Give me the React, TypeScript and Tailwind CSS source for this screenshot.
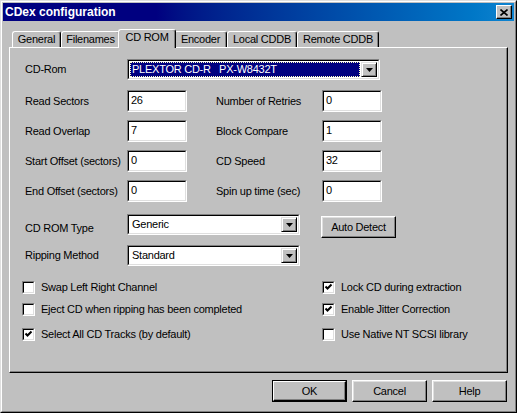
import React from 'react';

const Check = () => (
  <svg width="9" height="9" viewBox="0 0 9 9" className="block">
    <path d="M1.5 3.5 L3.5 5.5 L7.5 1.5" stroke="black" strokeWidth="2" fill="none" />
  </svg>
);

const Arrow = () => (
  <svg width="7" height="4" viewBox="0 0 7 4" className="block">
    <polygon points="0,0 7,0 3.5,4" fill="black" />
  </svg>
);

const Sunken: React.FC<{ className?: string; children?: React.ReactNode }> = ({ className = '', children }) => (
  <div className={`border border-t-[#808080] border-l-[#808080] border-r-white border-b-white ${className}`}>
    <div className="h-full w-full border border-t-black border-l-black border-r-[#dfdfdf] border-b-[#dfdfdf] bg-white flex items-center">
      {children}
    </div>
  </div>
);

const Edit: React.FC<{ value: string }> = ({ value }) => (
  <Sunken className="w-[60px] h-[22px]">
    <span className="pl-[2px] -mt-[2px]">{value}</span>
  </Sunken>
);

const DropButton = () => (
  <div className="w-[16px] h-full border border-t-[#dfdfdf] border-l-[#dfdfdf] border-r-black border-b-black shadow-[inset_1px_1px_white,inset_-1px_-1px_#808080] bg-[#c0c0c0] flex items-center justify-center">
    <Arrow />
  </div>
);

const Combo: React.FC<{ value: string; className?: string; selected?: boolean }> = ({ value, className = '', selected }) => (
  <Sunken className={`h-[21px] ${className}`}>
    <div className="flex-1 h-full p-px flex">
      {selected ? (
        <div className="flex-1 bg-[#000080] text-white border border-dotted border-[#ffffc0] flex items-center pl-[1px] whitespace-pre">
          {value}
        </div>
      ) : (
        <div className="flex-1 flex items-center pl-[2px]">{value}</div>
      )}
    </div>
    <div className="h-full py-px pr-px">
      <DropButton />
    </div>
  </Sunken>
);

const CheckBox: React.FC<{ label: string; checked?: boolean }> = ({ label, checked }) => (
  <div className="flex items-center gap-[6px] h-[13px]">
    <Sunken className="w-[13px] h-[13px] shrink-0">
      <div className="w-full h-full flex items-center justify-center">{checked && <Check />}</div>
    </Sunken>
    <span className="whitespace-nowrap">{label}</span>
  </div>
);

const Button: React.FC<{ label: string; isDefault?: boolean }> = ({ label, isDefault }) =>
  isDefault ? (
    <div className="w-[75px] h-[22px] border border-black">
      <div className="w-full h-full border border-t-white border-l-white border-r-black border-b-black shadow-[inset_-1px_-1px_#808080] flex items-center justify-center">
        {label}
      </div>
    </div>
  ) : (
    <div className="w-[75px] h-[22px] border border-t-white border-l-white border-r-black border-b-black shadow-[inset_-1px_-1px_#808080,inset_1px_1px_#dfdfdf] flex items-center justify-center">
      {label}
    </div>
  );

const Tab: React.FC<{ label: string; className: string; active?: boolean }> = ({ label, className, active }) => (
  <div
    className={`${className} border-t border-l border-r border-t-white border-l-white border-r-black rounded-t-[3px] shadow-[inset_-1px_0_#808080] bg-[#c0c0c0] flex items-center justify-center ${
      active ? 'relative z-10 h-[19px] -mb-px -mx-[2px] pb-[3px]' : 'h-[16px] pb-px'
    }`}
  >
    {label}
  </div>
);

export default function App() {
  return (
    <div className="w-[517px] h-[413px] bg-[#c0c0c0] border border-t-[#dfdfdf] border-l-[#dfdfdf] border-r-black border-b-black font-['Liberation_Sans',Arial,sans-serif] text-[11px] tracking-[-0.25px] text-black leading-[13px] select-none">
      <div className="h-full border border-t-white border-l-white border-r-[#808080] border-b-[#808080] p-px flex flex-col">
        {/* Title bar */}
        <div className="h-[18px] bg-linear-to-r from-[#000080] from-30% to-[#1084d0] flex items-center justify-between pl-[2px] pr-[2px]">
          <span className="text-white font-bold text-[12px] tracking-normal">CDex configuration</span>
          <div className="w-[16px] h-[14px] border border-t-white border-l-white border-r-black border-b-black shadow-[inset_-1px_-1px_#808080] bg-[#c0c0c0] flex items-center justify-center">
            <svg width="8" height="7" viewBox="0 0 8 7" className="block">
              <path d="M0.5 0.5 L7.5 6.5 M7.5 0.5 L0.5 6.5" stroke="black" strokeWidth="1.6" />
            </svg>
          </div>
        </div>

        <div className="px-[6px] flex flex-col">
          {/* Tabs */}
          <div className="mt-[8px] h-[18px] flex items-end pl-[3px]">
            <Tab label="General" className="w-[49px]" />
            <Tab label="Filenames" className="w-[59px]" />
            <Tab label="CD ROM" className="w-[58px]" active />
            <Tab label="Encoder" className="w-[53px]" />
            <Tab label="Local CDDB" className="w-[70px]" />
            <Tab label="Remote CDDB" className="w-[82px]" />
          </div>

          {/* Panel */}
          <div className="w-[499px] h-[326px] border border-t-white border-l-white border-r-black border-b-black shadow-[inset_-1px_-1px_#808080] pl-[15px] pt-[11px] flex flex-col">
            <div className="flex items-center h-[21px]">
              <span className="w-[102px]">CD-Rom</span>
              <Combo value="PLEXTOR CD-R   PX-W8432T" className="w-[253px]" selected />
            </div>

            <div className="mt-[10px] grid grid-cols-[102px_60px_29px_106px_60px] auto-rows-[22px] gap-y-[8px] items-center">
              <span>Read Sectors</span>
              <Edit value="26" />
              <span />
              <span>Number of Retries</span>
              <Edit value="0" />

              <span>Read Overlap</span>
              <Edit value="7" />
              <span />
              <span>Block Compare</span>
              <Edit value="1" />

              <span className="whitespace-nowrap">Start Offset (sectors)</span>
              <Edit value="0" />
              <span />
              <span>CD Speed</span>
              <Edit value="32" />

              <span className="whitespace-nowrap">End Offset (sectors)</span>
              <Edit value="0" />
              <span />
              <span>Spin up time (sec)</span>
              <Edit value="0" />
            </div>

            <div className="mt-[12px] flex items-center h-[21px]">
              <span className="w-[102px] mt-[8px]">CD ROM Type</span>
              <Combo value="Generic" className="w-[173px]" />
              <div className="ml-[21px] self-start mt-[2px]">
                <Button label="Auto Detect" />
              </div>
            </div>

            <div className="mt-[10px] flex items-center h-[21px]">
              <span className="w-[102px]">Ripping Method</span>
              <Combo value="Standard" className="w-[173px]" />
            </div>

            <div className="mt-[15px] -ml-[3px] flex">
              <div className="w-[300px] flex flex-col">
                <CheckBox label="Swap Left Right Channel" />
                <div className="mt-[9px]">
                  <CheckBox label="Eject CD when ripping has been completed" />
                </div>
                <div className="mt-[12px]">
                  <CheckBox label="Select All CD Tracks (by default)" checked />
                </div>
              </div>
              <div className="flex flex-col">
                <CheckBox label="Lock CD during extraction" checked />
                <div className="mt-[9px]">
                  <CheckBox label="Enable Jitter Correction" checked />
                </div>
                <div className="mt-[12px]">
                  <CheckBox label="Use Native NT SCSI library" />
                </div>
              </div>
            </div>
          </div>

          {/* Dialog buttons */}
          <div className="mt-[7px] flex justify-end gap-[5px] pr-px">
            <Button label="OK" isDefault />
            <Button label="Cancel" />
            <Button label="Help" />
          </div>
        </div>
      </div>
    </div>
  );
}
